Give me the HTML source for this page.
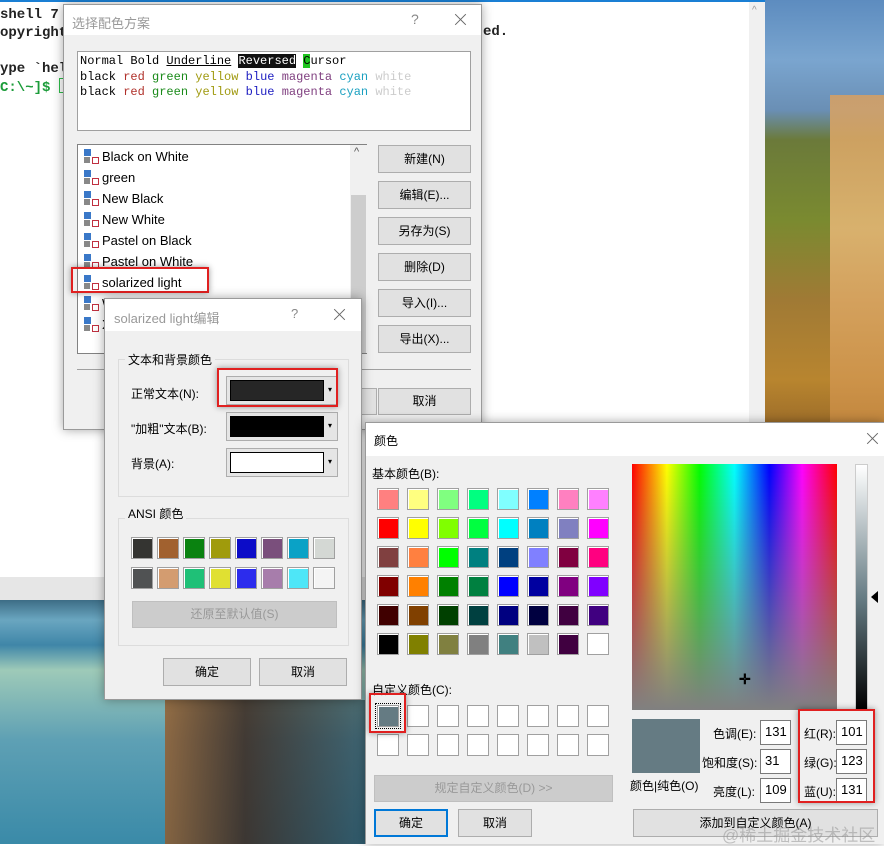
<!DOCTYPE html>
<html><head><meta charset="utf-8"><style>
*{box-sizing:border-box;margin:0;padding:0}
body{width:884px;height:844px;overflow:hidden;position:relative;background:#fff;font-family:"Liberation Sans","Noto Sans CJK SC",sans-serif;font-size:12px;color:#000}
.a{position:absolute}
.mono{font-family:"Liberation Mono","DejaVu Sans Mono",monospace}
.btn{position:absolute;background:#e1e1e1;border:1px solid #adadad;text-align:center;font-size:12px;color:#000}
.dlg{position:absolute;background:#f0f0f0;border:1px solid #9a9a9a;box-shadow:0 0 10px rgba(0,0,0,.35)}
.tb{position:absolute;left:0;top:0;right:0;background:#fff}
.sw{position:absolute;width:22px;height:22px;border:1px solid #a0a0a0;box-shadow:inset 1px 1px 0 #fff}
.inp{position:absolute;background:#fff;border:1px solid #7a7a7a;width:31px;height:25px;font-size:13px;padding:3px 0 0 4px}
.red{position:absolute;border:2px solid #e02020;box-shadow:0 0 6px rgba(0,0,0,.4)}
.li{position:absolute;left:6px;font-size:13px;height:20px}
.ic{display:inline-block;width:14px;height:14px;vertical-align:-2px;margin-right:4px;background:
linear-gradient(#3a78c8,#3a78c8) 0 0/7px 7px no-repeat,
linear-gradient(#888,#888) 0 8px/6px 6px no-repeat;position:relative}
.ic:after{content:"";position:absolute;left:8px;top:8px;width:5px;height:5px;border:1px solid #c03040}
.x{position:absolute;width:14px;height:14px}
.x:before,.x:after{content:"";position:absolute;left:0;top:6px;width:15px;height:1px;background:#666;transform:rotate(45deg)}
.x:after{transform:rotate(-45deg)}
</style></head><body>

<div class="a" style="left:765px;top:0;width:119px;height:430px;background:linear-gradient(180deg,#5d8cbf 0,#7aa5cf 60px,#6a8fb5 110px,#6b7a3a 140px,#7a8a30 220px,#a07a35 300px,#b8852f 380px,#9a6a28 430px)"></div>
<div class="a" style="left:830px;top:95px;width:54px;height:335px;background:linear-gradient(180deg,#d9a060,#e8b878 40%,#c88a40);opacity:.85"></div>

<div class="a" style="left:0;top:577px;width:365px;height:23px;background:#e6e6e6"></div>
<div class="a" style="left:0;top:600px;width:365px;height:244px;background:linear-gradient(180deg,#3d6d86 0,#6aa6c0 20px,#3f86a8 45px,#9ecab8 70px,#5ea0b4 140px,#3a8aa8 244px)"></div>
<div class="a" style="left:165px;top:700px;width:200px;height:144px;background:linear-gradient(90deg,rgba(150,90,40,.8),rgba(60,40,30,.85) 40%,rgba(40,60,70,.6))"></div>

<div class="a" style="left:0;top:0;width:765px;height:577px;background:#fff;border-top:2px solid #1a7fd4"></div>
<div class="a" style="left:749px;top:2px;width:16px;height:421px;background:#f0f0f0"></div>
<div class="a" style="left:752px;top:5px;font-size:10px;color:#999">^</div>
<div class="a mono" style="left:0;top:6px;font-size:14px;font-weight:bold;line-height:18px;white-space:pre;color:#222">shell 7
opyright

ype `hel</div>
<div class="a mono" style="left:0;top:78px;font-size:14px;font-weight:bold;color:#1c9c3a;white-space:pre">C:\~]$ <span style="display:inline-block;width:9px;height:15px;border:1px solid #2ebd4a;vertical-align:-2px"></span></div>
<div class="a mono" style="left:483px;top:24px;font-size:14px;font-weight:bold;color:#222">ed.</div>

<div class="dlg" style="left:63px;top:4px;width:419px;height:426px">
 <div class="tb" style="height:30px"></div>
 <div class="a" style="left:8px;top:8px;font-size:13px;color:#999">选择配色方案</div>
 <div class="a" style="left:347px;top:6px;font-size:14px;color:#888">?</div>
 <div class="x" style="left:389px;top:8px"></div>
 <div class="a mono" style="left:13px;top:46px;width:394px;height:80px;background:#fff;border:1px solid #a0a0a0;font-size:12px;line-height:15.5px;padding:2px 2px;white-space:pre">Normal Bold <u>Underline</u> <span style="background:#111;color:#fff">Reversed</span> <span style="background:#1ec51e">C</span>ursor
black <span style="color:#b0302a">red</span> <span style="color:#1a8a1a">green</span> <span style="color:#a09a10">yellow</span> <span style="color:#1c1cc0">blue</span> <span style="color:#804080">magenta</span> <span style="color:#1aa0c0">cyan</span> <span style="color:#ccc">white</span>
black <span style="color:#b0302a">red</span> <span style="color:#1a8a1a">green</span> <span style="color:#a09a10">yellow</span> <span style="color:#1c1cc0">blue</span> <span style="color:#804080">magenta</span> <span style="color:#1aa0c0">cyan</span> <span style="color:#ccc">white</span></div>
 <div class="a" style="left:13px;top:139px;width:290px;height:210px;background:#fff;border:1px solid #828282">
  <div class="li" style="top:4px"><span class="ic"></span>Black on White</div>
  <div class="li" style="top:25px"><span class="ic"></span>green</div>
  <div class="li" style="top:46px"><span class="ic"></span>New Black</div>
  <div class="li" style="top:67px"><span class="ic"></span>New White</div>
  <div class="li" style="top:88px"><span class="ic"></span>Pastel on Black</div>
  <div class="li" style="top:109px"><span class="ic"></span>Pastel on White</div>
  <div class="li" style="top:130px"><span class="ic"></span>solarized light</div>
  <div class="li" style="top:151px"><span class="ic"></span>White on Black</div>
  <div class="li" style="top:172px"><span class="ic"></span>X</div>
  <div class="a" style="left:272px;top:0;width:17px;height:208px;background:#f0f0f0"></div>
  <div class="a" style="left:273px;top:50px;width:15px;height:158px;background:#cdcdcd"></div>
  <div class="a" style="left:276px;top:1px;font-size:11px;color:#555">^</div>
 </div>
 <div class="btn" style="left:314px;top:140px;width:93px;height:28px;line-height:26px">新建(N)</div>
 <div class="btn" style="left:314px;top:176px;width:93px;height:28px;line-height:26px">编辑(E)...</div>
 <div class="btn" style="left:314px;top:212px;width:93px;height:28px;line-height:26px">另存为(S)</div>
 <div class="btn" style="left:314px;top:248px;width:93px;height:28px;line-height:26px">删除(D)</div>
 <div class="btn" style="left:314px;top:284px;width:93px;height:28px;line-height:26px">导入(I)...</div>
 <div class="btn" style="left:314px;top:320px;width:93px;height:28px;line-height:26px">导出(X)...</div>
 <div class="a" style="left:13px;top:364px;width:394px;height:1px;background:#a0a0a0"></div>
 <div class="btn" style="left:220px;top:383px;width:93px;height:27px"></div>
 <div class="btn" style="left:314px;top:383px;width:93px;height:27px;line-height:25px">取消</div>
</div>
<div class="red" style="left:71px;top:267px;width:138px;height:26px"></div>

<div class="dlg" style="left:104px;top:298px;width:258px;height:402px">
 <div class="tb" style="height:32px"></div>
 <div class="a" style="left:9px;top:9px;font-size:13px;color:#999">solarized light编辑</div>
 <div class="a" style="left:186px;top:7px;font-size:13px;color:#888">?</div>
 <div class="x" style="left:227px;top:9px"></div>
 <div class="a" style="left:13px;top:60px;width:231px;height:138px;border:1px solid #dcdcdc"></div>
 <div class="a" style="left:20px;top:52px;background:#f0f0f0;padding:0 3px">文本和背景颜色</div>
 <div class="a" style="left:26px;top:86px">正常文本(N):</div>
 <div class="a" style="left:26px;top:121px">"加粗"文本(B):</div>
 <div class="a" style="left:26px;top:156px">背景(A):</div>
 <div class="a" style="left:121px;top:77px;width:112px;height:29px;background:#e5e5e5;border:1px solid #adadad"><div class="a" style="left:3px;top:3px;width:94px;height:21px;background:#262626;border:1px solid #000"></div><div class="a" style="left:101px;top:8px;font-size:8px">▾</div></div>
 <div class="a" style="left:121px;top:113px;width:112px;height:29px;background:#e5e5e5;border:1px solid #adadad"><div class="a" style="left:3px;top:3px;width:94px;height:21px;background:#000"></div><div class="a" style="left:101px;top:8px;font-size:8px">▾</div></div>
 <div class="a" style="left:121px;top:149px;width:112px;height:29px;background:#e5e5e5;border:1px solid #adadad"><div class="a" style="left:3px;top:3px;width:94px;height:21px;background:#fff;border:1px solid #000"></div><div class="a" style="left:101px;top:8px;font-size:8px">▾</div></div>
 <div class="a" style="left:13px;top:219px;width:231px;height:128px;border:1px solid #dcdcdc"></div>
 <div class="a" style="left:20px;top:206px;background:#f0f0f0;padding:0 3px">ANSI 颜色</div>
 <div class="sw" style="left:26px;top:238px;background:#343431"></div>
 <div class="sw" style="left:52px;top:238px;background:#a1612f"></div>
 <div class="sw" style="left:78px;top:238px;background:#0a8210"></div>
 <div class="sw" style="left:104px;top:238px;background:#a09b0c"></div>
 <div class="sw" style="left:130px;top:238px;background:#0c0cc8"></div>
 <div class="sw" style="left:156px;top:238px;background:#7a4f7c"></div>
 <div class="sw" style="left:182px;top:238px;background:#0aa2c6"></div>
 <div class="sw" style="left:208px;top:238px;background:#d4d8d4"></div>
 <div class="sw" style="left:26px;top:268px;background:#505253"></div>
 <div class="sw" style="left:52px;top:268px;background:#d39c70"></div>
 <div class="sw" style="left:78px;top:268px;background:#1fc077"></div>
 <div class="sw" style="left:104px;top:268px;background:#e0e032"></div>
 <div class="sw" style="left:130px;top:268px;background:#2c2ced"></div>
 <div class="sw" style="left:156px;top:268px;background:#a77dab"></div>
 <div class="sw" style="left:182px;top:268px;background:#4ee6f7"></div>
 <div class="sw" style="left:208px;top:268px;background:#f4f4f4"></div>
 <div class="btn" style="left:27px;top:302px;width:205px;height:27px;line-height:25px;background:#cccccc;border-color:#bfbfbf;color:#999">还原至默认值(S)</div>
 <div class="btn" style="left:58px;top:359px;width:88px;height:28px;line-height:26px">确定</div>
 <div class="btn" style="left:154px;top:359px;width:88px;height:28px;line-height:26px">取消</div>
</div>
<div class="red" style="left:217px;top:368px;width:121px;height:39px"></div>

<div class="dlg" style="left:365px;top:422px;width:519px;height:422px;border-right:none;border-bottom:none">
 <div class="tb" style="height:33px"></div>
 <div class="a" style="left:8px;top:9px;font-size:12px">颜色</div>
 <div class="x" style="left:499px;top:9px"></div>
 <div class="a" style="left:6px;top:42px">基本颜色(B):</div>
 <div id="grid"></div>
 <div class="a" style="left:6px;top:258px">自定义颜色(C):</div>
 <div class="btn" style="left:8px;top:352px;width:239px;height:27px;line-height:25px;background:#cccccc;border-color:#bfbfbf;color:#999">规定自定义颜色(D) &gt;&gt;</div>
 <div class="btn" style="left:8px;top:386px;width:74px;height:28px;line-height:24px;border:2px solid #0078d7">确定</div>
 <div class="btn" style="left:92px;top:386px;width:74px;height:28px;line-height:26px">取消</div>
 <div class="a" style="left:266px;top:41px;width:205px;height:246px;background:linear-gradient(180deg,rgba(128,128,128,0),rgba(128,128,128,1)),linear-gradient(90deg,#f00,#ff0 17%,#0f0 33%,#0ff 50%,#00f 67%,#f0f 83%,#f00)"></div>
 <div class="a" style="left:373px;top:248px;font-size:14px;color:#000;font-weight:bold">✛</div>
 <div class="a" style="left:489px;top:41px;width:13px;height:246px;background:linear-gradient(#fff,#657b83 55%,#000);border:1px solid #ccc"></div>
 <div class="a" style="left:505px;top:168px;width:0;height:0;border-top:6px solid transparent;border-bottom:6px solid transparent;border-right:7px solid #000"></div>
 <div class="a" style="left:266px;top:296px;width:68px;height:54px;background:#657b83"></div>
 <div class="a" style="left:264px;top:354px">颜色|纯色(O)</div>
 <div class="a" style="left:347px;top:302px">色调(E):</div>
 <div class="a" style="left:336px;top:331px">饱和度(S):</div>
 <div class="a" style="left:347px;top:360px">亮度(L):</div>
 <div class="inp" style="left:394px;top:297px">131</div>
 <div class="inp" style="left:394px;top:326px">31</div>
 <div class="inp" style="left:394px;top:355px">109</div>
 <div class="a" style="left:438px;top:302px">红(R):</div>
 <div class="a" style="left:438px;top:331px">绿(G):</div>
 <div class="a" style="left:438px;top:360px">蓝(U):</div>
 <div class="inp" style="left:470px;top:297px">101</div>
 <div class="inp" style="left:470px;top:326px">123</div>
 <div class="inp" style="left:470px;top:355px">131</div>
 <div class="btn" style="left:267px;top:386px;width:245px;height:28px;line-height:26px">添加到自定义颜色(A)</div>
 <div class="a" style="left:356px;top:398px;font-size:17px;color:rgba(150,150,150,.55)">@稀土掘金技术社区</div>
</div>
<div class="red" style="left:798px;top:709px;width:77px;height:94px"></div>
<div class="red" style="left:369px;top:693px;width:37px;height:40px"></div>

<script>
var c=["#ff8080","#ffff80","#80ff80","#00ff80","#80ffff","#0080ff","#ff80c0","#ff80ff",
"#ff0000","#ffff00","#80ff00","#00ff40","#00ffff","#0080c0","#8080c0","#ff00ff",
"#804040","#ff8040","#00ff00","#008080","#004080","#8080ff","#800040","#ff0080",
"#800000","#ff8000","#008000","#008040","#0000ff","#0000a0","#800080","#8000ff",
"#400000","#804000","#004000","#004040","#000080","#000040","#400040","#400080",
"#000000","#808000","#808040","#808080","#408080","#c0c0c0","#400040","#ffffff"];
var h="";
for(var i=0;i<48;i++){h+='<div class="sw" style="left:'+(11+(i%8)*30)+'px;top:'+(65+Math.floor(i/8)*29)+'px;background:'+c[i]+'"></div>';}
for(var i=0;i<16;i++){var bg=(i==0)?"#657b83":"#fff";h+='<div class="sw" style="left:'+(11+(i%8)*30)+'px;top:'+(282+Math.floor(i/8)*29)+'px;background:'+bg+(i==0?';outline:1px dotted #000;outline-offset:1px':'')+'"></div>';}
document.getElementById("grid").innerHTML=h;
</script>
</body></html>
